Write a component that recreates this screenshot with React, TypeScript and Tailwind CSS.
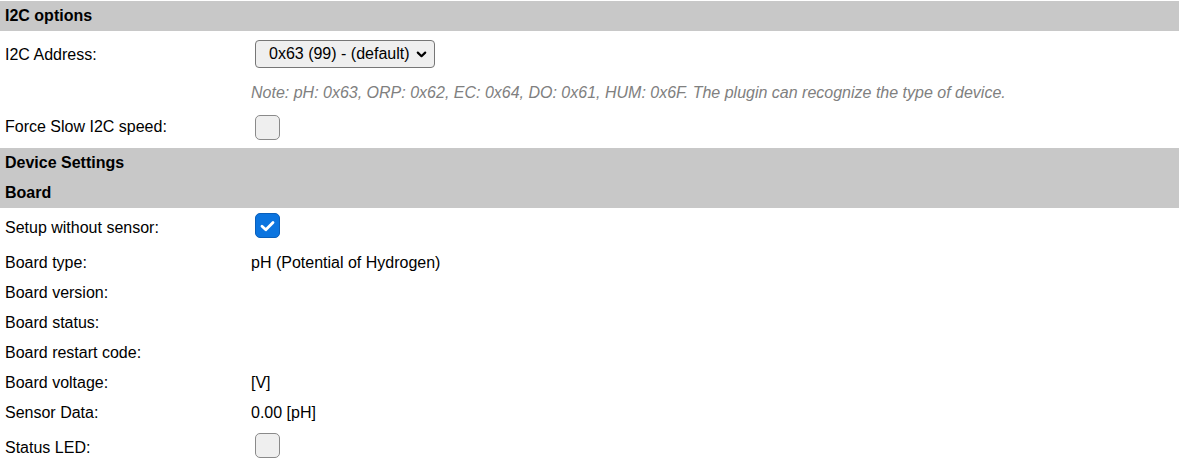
import React from 'react';

const font = { fontFamily: '"Liberation Sans", Arial, sans-serif' };

function SectionHeader({ title }: { title: string }) {
  return (
    <div className="flex h-[30px] items-center bg-[#c8c8c8] pl-[5px] font-bold text-black">
      {title}
    </div>
  );
}

function Checkbox({ checked }: { checked?: boolean }) {
  if (checked) {
    return (
      <div className="flex h-[25px] w-[25px] items-center justify-center rounded-[5px] border border-[#0a5fba] bg-[#0b74df]">
        <svg width="15" height="12" viewBox="0 0 15 12" fill="none">
          <path
            d="M2 6.3 L5.8 9.8 L13 2.4"
            stroke="#ffffff"
            strokeWidth="2.8"
            strokeLinecap="round"
            strokeLinejoin="round"
          />
        </svg>
      </div>
    );
  }
  return <div className="h-[25px] w-[25px] rounded-[5px] border-[1.5px] border-[#8a8a8a] bg-[#efefef]" />;
}

function TextRow({ label, value }: { label: string; value?: string }) {
  return (
    <div className="flex h-[30px] items-center">
      <div className="w-[251px] pl-[5px]">{label}</div>
      <div>{value}</div>
    </div>
  );
}

export default function App() {
  return (
    <div className="min-h-screen bg-white pt-[1px] text-[16px] leading-[18.4px] text-black" style={font}>
      <SectionHeader title="I2C options" />

      {/* I2C address */}
      <div className="flex h-[46px] items-center">
        <div className="w-[251px] pl-[5px] pt-[3px]">I2C Address:</div>
        <div className="relative ml-[4px]">
          <select
            defaultValue="99"
            className="h-[28px] w-[180px] appearance-none rounded-[4px] border border-[#767676] bg-[#efefef] pl-[13px] text-black outline-none"
            style={font}
          >
            <option value="99">0x63 (99) - (default)</option>
            <option value="98">0x62 (98)</option>
            <option value="100">0x64 (100)</option>
            <option value="97">0x61 (97)</option>
            <option value="111">0x6F (111)</option>
          </select>
          <svg
            className="pointer-events-none absolute right-[8px] top-[11px]"
            width="11"
            height="7"
            viewBox="0 0 11 7"
            fill="none"
          >
            <path d="M1.8 1.6 L5.5 5.2 L9.2 1.6" stroke="#000" strokeWidth="2.2" strokeLinecap="round" strokeLinejoin="round" />
          </svg>
        </div>
      </div>

      <div className="flex h-[29px] items-center">
        <div className="w-[251px]" />
        <div className="pt-[3px] italic text-[#808080]">
          Note: pH: 0x63, ORP: 0x62, EC: 0x64, DO: 0x61, HUM: 0x6F. The plugin can recognize the type of device.
        </div>
      </div>

      <div className="flex h-[42px] items-center">
        <div className="w-[251px] pl-[5px]">Force Slow I2C speed:</div>
        <div className="ml-[4px]">
          <Checkbox />
        </div>
      </div>

      <SectionHeader title="Device Settings" />
      <SectionHeader title="Board" />

      <div className="flex h-[40px] items-start">
        <div className="w-[251px] pl-[5px] pt-[11px]">Setup without sensor:</div>
        <div className="ml-[4px] mt-[5px]">
          <Checkbox checked />
        </div>
      </div>

      <TextRow label="Board type:" value="pH (Potential of Hydrogen)" />
      <TextRow label="Board version:" />
      <TextRow label="Board status:" />
      <TextRow label="Board restart code:" />
      <TextRow label="Board voltage:" value="[V]" />
      <TextRow label="Sensor Data:" value="0.00 [pH]" />

      <div className="flex h-[40px] items-start">
        <div className="w-[251px] pl-[5px] pt-[11px]">Status LED:</div>
        <div className="ml-[4px] mt-[5px]">
          <Checkbox />
        </div>
      </div>
    </div>
  );
}
